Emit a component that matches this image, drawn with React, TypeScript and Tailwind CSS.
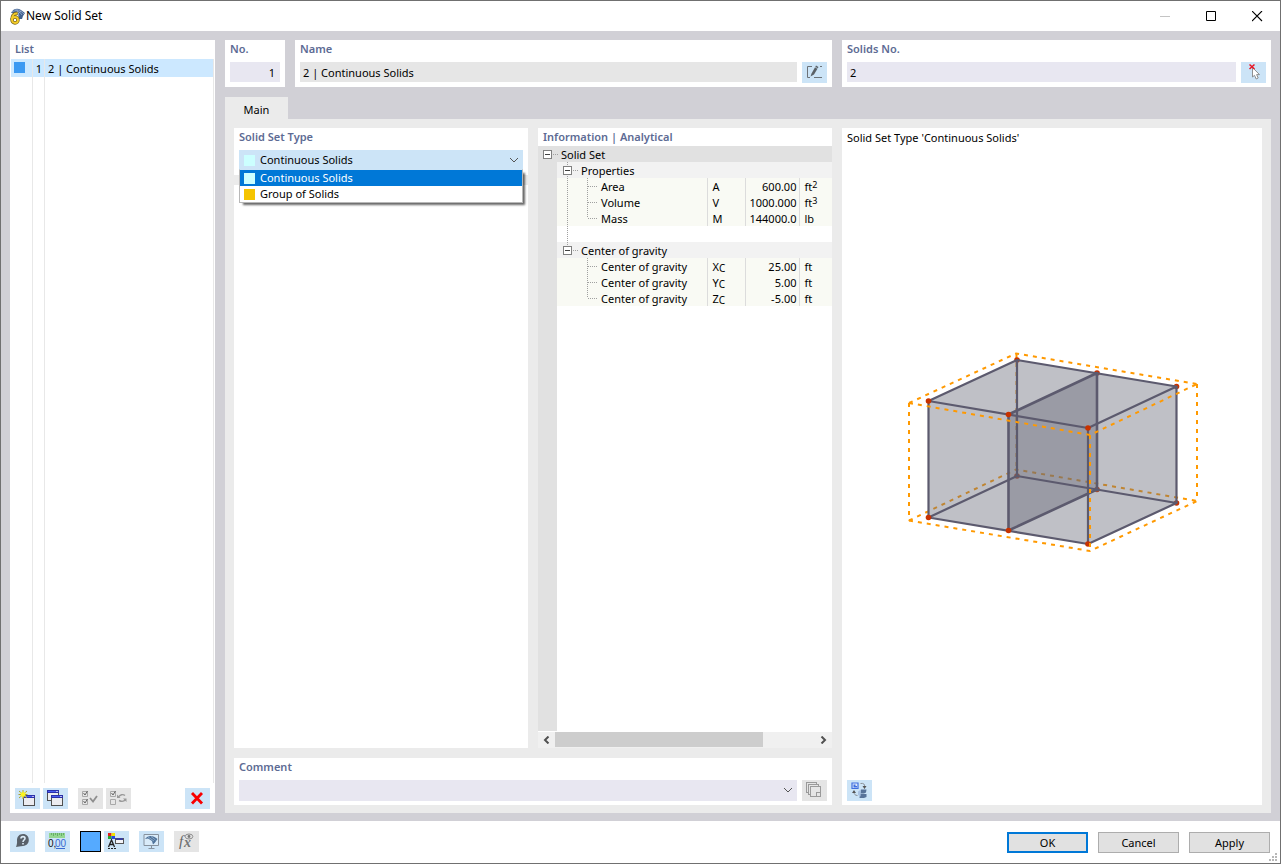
import type { ReactNode } from 'react';

const infoGroups = [
  {
    name: 'Properties',
    rows: [
      { name: 'Area', symbol: 'A', value: '600.00', unit: 'ft', power: '2' },
      { name: 'Volume', symbol: 'V', value: '1000.000', unit: 'ft', power: '3' },
      { name: 'Mass', symbol: 'M', value: '144000.0', unit: 'lb' },
    ],
  },
  {
    name: 'Center of gravity',
    rows: [
      { name: 'Center of gravity', symbol: 'X', sub: 'C', value: '25.00', unit: 'ft' },
      { name: 'Center of gravity', symbol: 'Y', sub: 'C', value: '5.00', unit: 'ft' },
      { name: 'Center of gravity', symbol: 'Z', sub: 'C', value: '-5.00', unit: 'ft' },
    ],
  },
];

const solidSetTypes = [
  { name: 'Continuous Solids', swatch: 'bg-[#ccffff]', selected: true },
  { name: 'Group of Solids', swatch: 'bg-[#f5c400]', selected: false },
];

const nodes = {
  back: [[1017, 360], [1097, 373], [1176.5, 386.5], [1017, 476], [1097, 489.5], [1176.5, 503]],
  front: [[928.5, 401], [1008.5, 414.5], [1088, 428], [928.5, 517.5], [1008.5, 530.5], [1088, 544]],
};

function Panel({ title, className, children }: { title: string; className?: string; children?: ReactNode }) {
  return (
    <section className={`bg-white ${className ?? ''}`}>
      <h2 className="h-[22px] px-[5px] text-[11px] leading-[18px] font-semibold text-[#5d6b94]">{title}</h2>
      {children}
    </section>
  );
}

function ToolButton({ label, disabled, children }: { label: string; disabled?: boolean; children: ReactNode }) {
  return (
    <button
      type="button"
      aria-label={label}
      disabled={disabled}
      className={`h-[21px] w-[25px] shrink-0 ${disabled ? 'bg-[#e5e5e5]' : 'bg-[#cce4f7]'}`}
    >
      <svg width="25" height="21" viewBox="0 0 25 21" fill="none">
        {children}
      </svg>
    </button>
  );
}

function MiniWindow({ x, y }: { x: number; y: number }) {
  return (
    <g shapeRendering="crispEdges">
      <rect x={x + 0.5} y={y + 0.5} width="11" height="10" fill="#ececf0" stroke="#505050" />
      <rect x={x} y={y} width="12" height="3" fill="#2c30a8" />
      <rect x={x + 1} y={y + 1} width="8" height="1" fill="#4a5cf0" />
      <rect x={x + 9} y={y + 1} width="2" height="1" fill="#b8bcf0" />
    </g>
  );
}

function AppIcon() {
  return (
    <svg width="16" height="17" viewBox="0 0 16 17" fill="none">
      <path d="M2 5C4 1 8-.5 12 2L16 5 14 8 13 11 10 11 9 7 5 5Z" fill="#41618f" />
      <path d="M3 4C6 2 10 2 13 7M6 2C9 1 12 3 15 6M8 2 10 8M12 3 9 6" stroke="#9fb4d4" strokeWidth=".8" />
      <g stroke="#75621c" strokeWidth="3.4">
        <path d="M8.500 5.500C4.500 5 3 8 3 11.500" />
        <circle cx="6" cy="12" r="3" />
      </g>
      <g stroke="#f3cb27" strokeWidth="1.9">
        <path d="M8.500 5.500C4.500 5 3 8 3 11.500" />
        <circle cx="6" cy="12" r="3" />
      </g>
    </svg>
  );
}

function Chevron() {
  return (
    <svg width="10" height="6" viewBox="0 0 10 6" className="pointer-events-none absolute top-[7px] right-1" fill="none">
      <path d="M1 1 5 5 9 1" stroke="#555" />
    </svg>
  );
}

// Connector lines of the property tree, drawn one 16px row at a time
function TreeLines({ kind, trunk }: { kind: 'group' | 'item' | 'itemLast' | 'gap'; trunk: boolean }) {
  return (
    <svg width="43" height="16" viewBox="0 0 43 16" className="shrink-0" fill="none" shapeRendering="crispEdges">
      <g stroke="#a0a0a0" strokeDasharray="1 1">
        {trunk && <path d="M10.5 0V16" />}
        {kind === 'group' && <path d="M10.5 0V4M16 8.5H22" />}
        {kind === 'item' && <path d="M30.5 0V16M31 8.5H41" />}
        {kind === 'itemLast' && <path d="M30.5 0V8M31 8.5H41" />}
      </g>
      {kind === 'group' && (
        <>
          <rect x="6.5" y="4.5" width="8" height="8" fill="#fff" stroke="#808080" />
          <path d="M8 8.5H13" stroke="#404040" />
        </>
      )}
    </svg>
  );
}

function InfoTable() {
  return (
    <table className="w-full table-fixed border-collapse text-[11px] leading-[18px]">
      <colgroup>
        <col className="w-[19px]" />
        <col />
        <col className="w-[38px]" />
        <col className="w-[54px]" />
        <col className="w-[32px]" />
      </colgroup>
      <tbody>
        <tr className="h-4 bg-[#e1e1e1]">
          <th colSpan={5} className="p-0 text-left font-normal">
            <div className="flex h-4">
              <svg width="23" height="16" viewBox="0 0 23 16" fill="none" shapeRendering="crispEdges">
                <rect x="5.5" y="4.5" width="8" height="8" fill="#fff" stroke="#808080" />
                <path d="M7 8.5H12" stroke="#404040" />
                <path d="M15 8.5H21" stroke="#a0a0a0" strokeDasharray="1 1" />
              </svg>
              Solid Set
            </div>
          </th>
        </tr>
        {infoGroups.map((group, g) => {
          const lastGroup = g === infoGroups.length - 1;
          return [
            <tr key={group.name} className="h-4">
              <td className="bg-[#e1e1e1] p-0" />
              <th colSpan={4} className="bg-[#f2f2f2] p-0 text-left font-normal">
                <div className="flex h-4">
                  <span className="h-4 w-6 shrink-0 overflow-hidden">
                    <TreeLines kind="group" trunk={!lastGroup} />
                  </span>
                  {group.name}
                </div>
              </th>
            </tr>,
            ...group.rows.map((row, i) => (
              <tr key={group.name + i} className="h-4 bg-[#f9faf4]">
                <td className="bg-[#e1e1e1] p-0" />
                <td className="p-0">
                  <div className="flex h-4 gap-px whitespace-nowrap">
                    <TreeLines kind={i === group.rows.length - 1 ? 'itemLast' : 'item'} trunk={!lastGroup} />
                    {row.name}
                  </div>
                </td>
                <td className="border-l border-[#dcdcdc] py-0 pr-0 pl-1">
                  <div className="h-4">
                    {row.symbol}
                    {'sub' in row && <span className="relative top-px text-[10px]">{row.sub}</span>}
                  </div>
                </td>
                <td className="border-l border-[#dcdcdc] py-0 pr-[3px] pl-0 text-right">
                  <div className="h-4">{row.value}</div>
                </td>
                <td className="border-l border-[#dcdcdc] py-0 pr-0 pl-1">
                  <div className="h-4">
                    {row.unit}
                    {'power' in row && <span className="relative -top-[3px] text-[9px]">{row.power}</span>}
                  </div>
                </td>
              </tr>
            )),
            !lastGroup && (
              <tr key={group.name + 'gap'} className="h-4">
                <td className="bg-[#e1e1e1] p-0" />
                <td colSpan={4} className="p-0">
                  <div className="h-4">
                    <TreeLines kind="gap" trunk />
                  </div>
                </td>
              </tr>
            ),
          ];
        })}
      </tbody>
    </table>
  );
}

function SolidsDrawing() {
  return (
    <svg viewBox="900 345 305 215" width="305" height="215" fill="none">
      <g stroke="#ff9900" strokeWidth="2" strokeDasharray="4 5">
        <path d="M909 403 1016 353.5 1197 384" />
        <path d="M1016.5 354V470" />
        <path d="M909 520.5 1016 469.5 1197 501" />
      </g>
      {nodes.back.map(([x, y]) => (
        <circle key={`${x}-${y}`} cx={x} cy={y} r="2.8" fill="#c83200" />
      ))}
      <g fill="#666977" fillOpacity=".42">
        <path d="M928.5 401 1017 360 1176.5 386.5V503L1088 544 928.5 517.5Z" />
        <path d="M1008.5 414.5 1097 373V489.5L1008.5 530.5Z" />
      </g>
      <g stroke="#5c5a6e" strokeWidth="2.2" strokeLinejoin="round">
        <path d="M928.5 401 1017 360 1176.5 386.5 1088 428Z" />
        <path d="M928.5 517.5 1017 476 1176.5 503 1088 544Z" />
        <path d="M928.5 401V517.5M1017 360V476M1176.5 386.5V503M1088 428V544" />
        <path d="M1008.5 414.5 1097 373V489.5L1008.5 530.5Z" strokeWidth="2.6" />
      </g>
      {nodes.front.map(([x, y]) => (
        <circle key={`${x}-${y}`} cx={x} cy={y} r="2.8" fill="#c83200" />
      ))}
      <g stroke="#ff9900" strokeWidth="2" strokeDasharray="4 5">
        <path d="M909 403V520.5" />
        <path d="M1197 384V501" />
        <path d="M909 403 1090 435 1197 384" />
        <path d="M909 520.5 1090 551 1197 501" />
        <path d="M1090 435V551" />
      </g>
    </svg>
  );
}

function TitleBar() {
  return (
    <header className="flex h-[30px] items-center bg-white pl-2">
      <AppIcon />
      <h1 className="pl-px text-[12px] leading-4">New Solid Set</h1>
      <div className="ml-auto flex h-full">
        <button type="button" aria-label="Minimize" disabled className="flex w-[46px] items-center justify-center">
          <svg width="11" height="11" viewBox="0 0 11 11"><path d="M0 5.5H10" stroke="#c4c4c4" /></svg>
        </button>
        <button type="button" aria-label="Maximize" className="flex w-[46px] items-center justify-center">
          <svg width="11" height="11" viewBox="0 0 11 11" fill="none"><path d="M.5 .5H9.5V9.5H.5Z" stroke="#000" /></svg>
        </button>
        <button type="button" aria-label="Close" className="flex w-[46px] items-center justify-center">
          <svg width="11" height="11" viewBox="0 0 11 11"><path d="M0 0 10 10M10 0 0 10" stroke="#000" strokeWidth="1.1" /></svg>
        </button>
      </div>
    </header>
  );
}

function ListPanel() {
  return (
    <Panel title="List" className="flex w-[205px] shrink-0 flex-col">
      <div className="-mt-[3px] mr-px ml-px flex flex-1 flex-col border-r border-[#e8e8e8] text-[11px]">
        <div className="grid h-[18px] grid-cols-[22px_12px_1fr] bg-[#cce8ff] leading-5">
          <span className="border-r border-[#e8e8e8] pt-[3px] pl-[3px]">
            <span className="block size-[11px] bg-[#3b99f2]" />
          </span>
          <span className="border-r border-[#e8e8e8] pr-[2px] text-right">1</span>
          <span className="pl-[3px]">2 | Continuous Solids</span>
        </div>
        <div className="grid flex-1 grid-cols-[22px_12px_1fr]">
          <span className="border-r border-[#e8e8e8]" />
          <span className="border-r border-[#e8e8e8]" />
        </div>
      </div>
      <div className="flex gap-[3px] px-[5px] pt-[5px] pb-1">
        <ToolButton label="New">
          <MiniWindow x={8} y={7} />
          <path d="M8 2V11M4 3 12 10M12 3 4 10M3.5 6.5H12.5" stroke="#a8a030" />
          <path d="M8 2.5 9 5 11.500 4 10 6.5 11.500 9 9 8 8 10.500 7 8 4.500 9 6 6.5 4.500 4 7 5Z" fill="#fdf51c" />
        </ToolButton>
        <ToolButton label="Copy">
          <MiniWindow x={4} y={2} />
          <MiniWindow x={8} y={7} />
        </ToolButton>
        <span className="w-1" />
        <ToolButton label="Select all" disabled>
          <path d="M4.5 3.5H9.5V8.5H4.5ZM4.5 11.5H9.5V16.5H4.5Z" stroke="#a8a8a8" />
          <path d="M5.5 5 7 7 9.5 3M5.5 13 7 15 9.5 11" stroke="#666" />
          <path d="M12 10 15 13.5 19 8" stroke="#8e8e8e" strokeWidth="1.8" />
        </ToolButton>
        <ToolButton label="Invert selection" disabled>
          <path d="M4.5 3.5H9.5V8.5H4.5ZM4.5 11.5H9.5V16.5H4.5Z" stroke="#a8a8a8" />
          <path d="M5.5 5 7 7 9.5 3" stroke="#666" />
          <path d="M12.5 9C14 6.5 17 6 19 7.5M19.5 11.5C18 13.5 15 13.5 13 12.500" stroke="#999" strokeWidth="1.4" />
          <path d="M11 6.500V10H14.500ZM20.500 14V10.500H17Z" fill="#999" />
        </ToolButton>
        <span className="flex-1" />
        <ToolButton label="Delete">
          <path d="M7 5 17 15.5M17 5 7 15.5" stroke="#f80000" strokeWidth="2.8" />
        </ToolButton>
      </div>
    </Panel>
  );
}

function TopFields() {
  return (
    <div className="grid grid-cols-[60px_537fr_429fr] gap-[10px] text-[11px]">
      <Panel title="No." className="pb-1">
        <div className="px-[5px]">
          <input aria-label="No." defaultValue="1" className="block h-[21px] w-full border-b border-white bg-[#e8e7f1] pr-[5px] text-right" />
        </div>
      </Panel>
      <Panel title="Name" className="pb-1">
        <div className="flex gap-[5px] px-[5px]">
          <input aria-label="Name" defaultValue="2 | Continuous Solids" className="block h-[21px] min-w-0 flex-1 border-b border-white bg-[#e6e6e6] pl-[3px]" />
          <ToolButton label="Edit name">
            <path d="M10 4.5H5.5V15.5H8M12 15.5H20M18 4.5H20" stroke="#6c7278" />
            <path d="M8.500 14.500 9.500 11.500 14 3.500 16.500 5 12 12.500Z" fill="#5a6066" />
            <path d="M13 5 15.800 6.600" stroke="#cce4f7" strokeWidth=".7" />
          </ToolButton>
        </div>
      </Panel>
      <Panel title="Solids No." className="pb-1">
        <div className="flex gap-[5px] px-[5px]">
          <input aria-label="Solids No." defaultValue="2" className="block h-[21px] min-w-0 flex-1 border-b border-white bg-[#e8e7f1] pl-[3px]" />
          <ToolButton label="Pick solids">
            <path d="M11.500 5.500V15L13.500 13.300 15.200 17 17.200 16 15.600 12.600H18.500Z" fill="#fff" stroke="#858585" strokeWidth=".9" />
            <path d="M8.5 2.5 13.5 7M13.5 2.5 8.5 7" stroke="#e81525" strokeWidth="1.500" />
          </ToolButton>
        </div>
      </Panel>
    </div>
  );
}

function SolidSetType() {
  return (
    <Panel title="Solid Set Type" className="h-[47px]">
      <div className="relative mx-[5px] text-[11px]">
        <select aria-label="Solid Set Type" className="block h-[21px] w-full appearance-none bg-[#cce4f7] pl-[21px]">
          {solidSetTypes.map((type) => (
            <option key={type.name}>{type.name}</option>
          ))}
        </select>
        <span className="pointer-events-none absolute top-[5px] left-[5px] size-[11px] bg-[#ccffff]" />
        <Chevron />
        <ul role="listbox" className="absolute top-[19px] z-10 w-full border border-[#b8b8b8] border-t-[#cce4f7] bg-white shadow-[3px_3px_2px_-1px_rgba(0,0,0,0.6)]">
          {solidSetTypes.map((type) => (
            <li
              key={type.name}
              role="option"
              aria-selected={type.selected}
              className={`flex h-4 items-center gap-[5px] pl-1 leading-4 ${type.selected ? 'bg-[#0078d7] text-white' : ''}`}
            >
              <span className={`size-[11px] ${type.swatch}`} />
              {type.name}
            </li>
          ))}
        </ul>
      </div>
    </Panel>
  );
}

function Information() {
  return (
    <section className="flex min-w-0 flex-col bg-white">
      <h2 className="h-[18px] shrink-0 px-[5px] text-[11px] leading-[18px] font-semibold text-[#5d6b94]">Information | Analytical</h2>
      <InfoTable />
      <div className="mb-px w-[19px] flex-1 bg-[#e1e1e1]" />
      <div className="flex h-4 items-center bg-[#f0f0f0]">
        <button type="button" aria-label="Scroll left" className="flex w-[17px] justify-center">
          <svg width="7" height="8" viewBox="0 0 7 8" fill="none"><path d="M5.500 .5 2 4 5.500 7.500" stroke="#505050" strokeWidth="2" /></svg>
        </button>
        <div className="h-full flex-1 pb-px">
          <div className="h-full w-4/5 bg-[#cdcdcd]" />
        </div>
        <button type="button" aria-label="Scroll right" className="flex w-[17px] justify-center">
          <svg width="7" height="8" viewBox="0 0 7 8" fill="none"><path d="M1.500 .5 5 4 1.500 7.500" stroke="#505050" strokeWidth="2" /></svg>
        </button>
      </div>
    </section>
  );
}

function MainTab() {
  return (
    <div className="grid flex-1 grid-cols-[598fr_420fr] gap-[10px] bg-[#ebebeb] px-[9px] pt-[9px] pb-2">
      <div className="flex flex-col gap-[10px]">
        <div className="grid flex-1 grid-cols-2 gap-[10px]">
          <div className="flex flex-col gap-[10px]">
            <SolidSetType />
            <div className="flex-1 bg-white" />
          </div>
          <Information />
        </div>
        <Panel title="Comment" className="pb-1">
          <div className="flex gap-[5px] px-[5px]">
            <div className="relative flex-1">
              <select aria-label="Comment" className="block h-[21px] w-full appearance-none bg-[#e8e7f1] text-[11px]">
                <option />
              </select>
              <Chevron />
            </div>
            <ToolButton label="Comment library" disabled>
              <g stroke="#9a9a9a" fill="#e5e5e5" shapeRendering="crispEdges">
                <rect x="4.5" y="2.5" width="10" height="10" />
                <rect x="6.5" y="4.5" width="10" height="10" />
                <rect x="8.5" y="6.5" width="10" height="10" />
                <path d="M14.5 16V12.5H18" />
              </g>
            </ToolButton>
          </div>
        </Panel>
      </div>
      <section className="flex flex-col bg-white px-[5px] pb-1">
        <h2 className="text-[11px] leading-5">Solid Set Type 'Continuous Solids'</h2>
        <div className="flex flex-1 items-center justify-center pb-6">
          <SolidsDrawing />
        </div>
        <ToolButton label="Switch image">
          <path d="M5 3H11V8.500H5Z" fill="#dce8fa" stroke="#3f6fe0" strokeWidth="1.2" />
          <path d="M6.500 4.500V7.500H10V6H8.500V4.500Z" fill="#3f6fe0" />
          <path d="M13.500 3.500C16.500 3 18 4 17.500 7M7 12C7 14 8 15.500 10.500 15.500" stroke="#8a9098" />
          <path d="M15.500 6H19.500L17.500 9ZM5 13 7 10 9 13Z" fill="#555" />
          <path d="M14 9.500H19.500L19 12.500 17 13.500H13ZM13 14H19.500V17L17 18H12.500Z" fill="#587399" />
          <path d="M11 11.500 14 9.500 13.500 16.500 11 15Z" fill="#a9c2e2" />
        </ToolButton>
      </section>
    </div>
  );
}

function Footer() {
  return (
    <footer className="relative flex h-[42px] items-start bg-white px-[9px] pt-[10px] text-[11px]">
      <div className="flex gap-[10px]">
        <ToolButton label="Help">
          <path d="M13 3C9 3 7 6 7 9 7 11 7.500 12 6 16 8 15.800 10 15.500 13 15 17 14.500 18.800 12 18.800 9 18.800 5.500 16.500 3 13 3Z" fill="#59616a" />
          <path d="M11 7.500C11 5 15 5 15 7.300 15 9 13 9 13 11M13 12V13.500" stroke="#dcecf8" strokeWidth="1.600" />
        </ToolButton>
        <ToolButton label="Units">
          <path d="M4 2H20V7H4Z" fill="#93d690" />
          <path d="M6.5 2V4M8.5 2V5M10.5 2V4M12.5 2V5M14.5 2V4M16.5 2V5M18.5 2V4" stroke="#5aa55c" strokeWidth=".8" />
          <text x="3" y="16" fontSize="10" fontFamily="Liberation Sans, sans-serif" fill="#111">0,</text>
          <text x="10" y="16" fontSize="10" fontFamily="Liberation Sans, sans-serif" fill="#3a6ad0">00</text>
          <path d="M11 17.5H20" stroke="#3a6ad0" />
        </ToolButton>
        <div className="flex gap-[3px]">
          <button type="button" aria-label="Color" className="size-[21px] border border-black bg-[#55aaff]" />
          <ToolButton label="Display properties">
            <path d="M4 2H7.500V5H4Z" fill="#e41c1c" />
            <path d="M7.500 2H11V5H7.500Z" fill="#f4e200" />
            <path d="M4 5H7.500V8H4Z" fill="#24a82c" />
            <path d="M7.500 5H11V8H7.500Z" fill="#2648e0" />
            <path d="M4.500 16 7.500 9 10.500 16M5.5 13.5H9.5" stroke="#222" strokeWidth="1.300" />
            <path d="M4 17.5H12" stroke="#222" strokeDasharray="2 1" />
            <rect x="11.5" y="7.5" width="8" height="5" fill="#f4f4f8" stroke="#555" />
            <path d="M12 8H19" stroke="#3a3f9c" strokeWidth="2" />
          </ToolButton>
        </div>
        <ToolButton label="Visibility">
          <path d="M5 3.5H19.5V14.5H5Z" fill="#d9ebf9" stroke="#87929e" />
          <path d="M12.5 15V17M9.500 17.5H15.500" stroke="#87929e" />
          <path d="M6 8C9 4 14 4 18.500 8L16 11.500 14 13.500 13 10 9 7.500Z" fill="#4d7199" />
          <path d="M9 6 15 10M12 5.500 16.500 9" stroke="#a8c1dc" strokeWidth=".7" />
        </ToolButton>
        <ToolButton label="Formula" disabled>
          <text x="5" y="15" fontSize="15" fontStyle="italic" fontFamily="Liberation Serif, serif" fill="#666">f</text>
          <text x="10" y="16" fontSize="14" fontStyle="italic" fontFamily="Liberation Serif, serif" fontWeight="bold" fill="#777">x</text>
          <ellipse cx="15" cy="5.500" rx="3.800" ry="2.500" stroke="#8c8c8c" />
          <circle cx="15" cy="5.500" r="1.400" fill="#777" />
        </ToolButton>
      </div>
      <div className="ml-auto flex gap-[10px] pt-px pr-px">
        <button type="button" className="h-[21px] w-[81px] border-2 border-[#0078d7] bg-[#e1e1e1] pt-px leading-4">OK</button>
        <button type="button" className="h-[21px] w-[81px] border border-[#adadad] bg-[#e1e1e1] pt-px leading-4">Cancel</button>
        <button type="button" className="h-[21px] w-[81px] border border-[#adadad] bg-[#e1e1e1] pt-px leading-4">Apply</button>
      </div>
      <svg width="8" height="8" viewBox="0 0 8 8" className="absolute right-[3px] bottom-[2px]" fill="#b8b8b8">
        <path d="M6 0h2v2h-2zM6 3h2v2h-2zM3 3h2v2h-2zM6 6h2v2h-2zM3 6h2v2h-2zM0 6h2v2h-2z" />
      </svg>
    </footer>
  );
}

export default function App() {
  return (
    <div className="flex min-h-screen flex-col border border-[#707070] bg-[#d1d0d6] font-['Noto_Sans',sans-serif] text-black">
      <TitleBar />
      <main className="flex flex-1 gap-[10px] px-[9px] pt-[9px] pb-2">
        <ListPanel />
        <div className="flex min-w-0 flex-1 flex-col">
          <TopFields />
          <div role="tablist" className="mt-[10px] flex">
            <button type="button" role="tab" aria-selected="true" className="h-[22px] w-[63px] bg-[#ebebeb] pt-1 text-[11px] leading-4">
              Main
            </button>
          </div>
          <MainTab />
        </div>
      </main>
      <Footer />
    </div>
  );
}
